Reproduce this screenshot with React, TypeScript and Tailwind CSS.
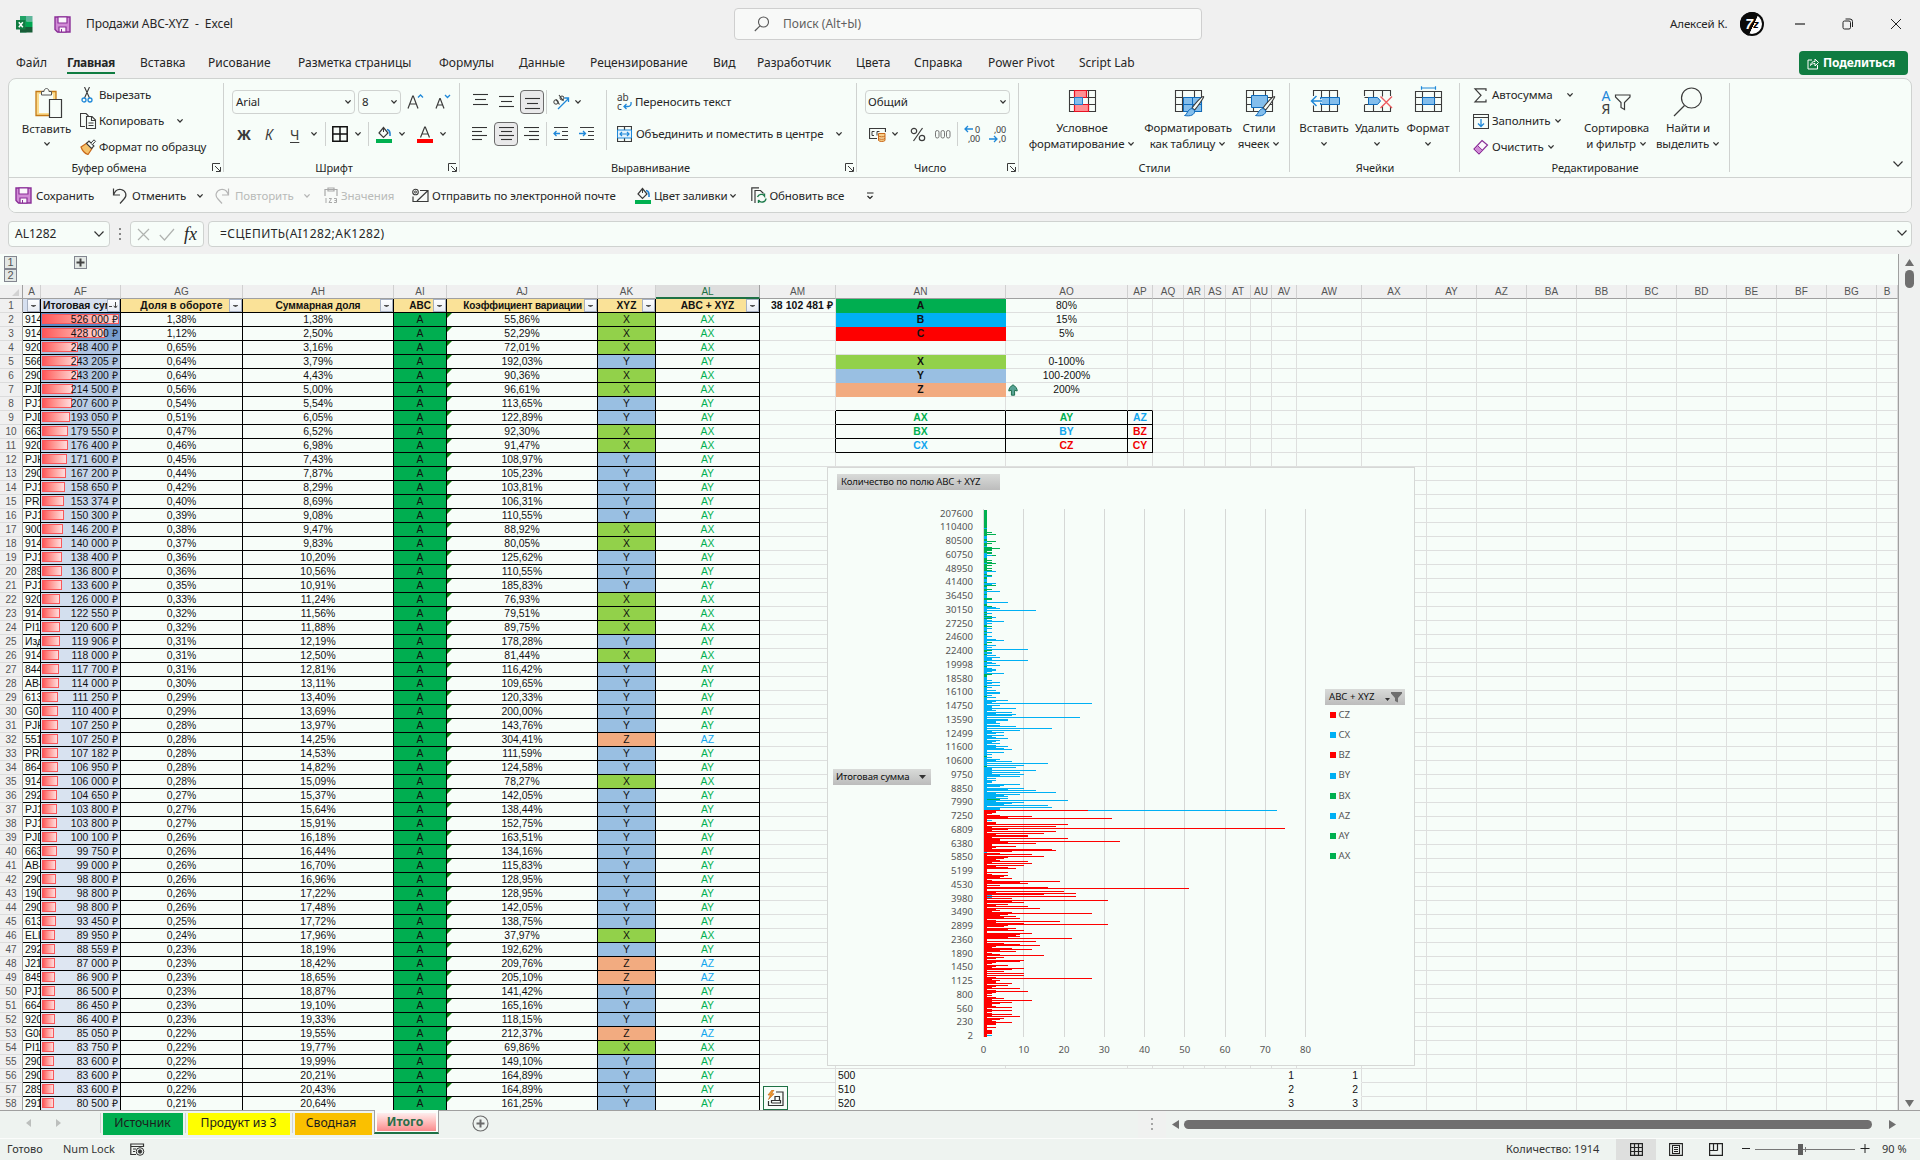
import React from "react";

const SHEET_DATA = `914|526 000|1,38|1,38|55,86|X
914|428 000|1,12|2,50|52,29|X
920|248 400|0,65|3,16|72,01|X
566|243 205|0,64|3,79|192,03|Y
290|243 200|0,64|4,43|90,36|X
PJD|214 500|0,56|5,00|96,61|X
PJ1|207 600|0,54|5,54|113,65|Y
PJD|193 050|0,51|6,05|122,89|Y
663|179 550|0,47|6,52|92,30|X
920|176 400|0,46|6,98|91,47|X
PJH|171 600|0,45|7,43|108,97|Y
290|167 200|0,44|7,87|105,23|Y
PJ1|158 650|0,42|8,29|103,81|Y
PR-|153 374|0,40|8,69|106,31|Y
PJ1|150 300|0,39|9,08|110,55|Y
900|146 200|0,38|9,47|88,92|X
914|140 000|0,37|9,83|80,05|X
PJ1|138 400|0,36|10,20|125,62|Y
289|136 800|0,36|10,56|110,55|Y
PJ1|133 600|0,35|10,91|185,83|Y
920|126 000|0,33|11,24|76,93|X
914|122 550|0,32|11,56|79,51|X
PI1|120 600|0,32|11,88|89,75|X
Изд|119 906|0,31|12,19|178,28|Y
914|118 000|0,31|12,50|81,44|X
844|117 700|0,31|12,81|116,42|Y
AB-|114 000|0,30|13,11|109,65|Y
613|111 250|0,29|13,40|120,33|Y
G07|110 400|0,29|13,69|200,00|Y
PJH|107 250|0,28|13,97|143,76|Y
551|107 250|0,28|14,25|304,41|Z
PR-|107 182|0,28|14,53|111,59|Y
864|106 950|0,28|14,82|124,58|Y
914|106 000|0,28|15,09|78,27|X
292|104 650|0,27|15,37|142,05|Y
PJ1|103 800|0,27|15,64|138,44|Y
PJ1|103 800|0,27|15,91|152,75|Y
PJD|100 100|0,26|16,18|163,51|Y
663|99 750|0,26|16,44|134,16|Y
AB-|99 000|0,26|16,70|115,83|Y
290|98 800|0,26|16,96|128,95|Y
190|98 800|0,26|17,22|128,95|Y
290|98 800|0,26|17,48|142,05|Y
613|93 450|0,25|17,72|138,75|Y
ELI|89 950|0,24|17,96|37,97|X
292|88 559|0,23|18,19|192,62|Y
J21|87 000|0,23|18,42|209,76|Z
845|86 900|0,23|18,65|205,10|Z
PJ1|86 500|0,23|18,87|141,42|Y
664|86 450|0,23|19,10|165,16|Y
920|86 400|0,23|19,33|118,15|Y
G08|85 050|0,22|19,55|212,37|Z
PI1|83 750|0,22|19,77|69,86|X
290|83 600|0,22|19,99|149,10|Y
290|83 600|0,22|20,21|164,89|Y
289|83 600|0,22|20,43|164,89|Y
291|80 500|0,21|20,64|161,25|Y`
  .split("\n")
  .map((l) => l.split("|"));

/* ---------- small shared pieces ---------- */

function Chev({ big = false, c = "#333" }: { big?: boolean; c?: string }) {
  return big ? (
    <svg width="12" height="8" viewBox="0 0 12 8" className="shrink-0" fill="none" stroke={c} strokeWidth="1.2">
      <path d="M1.5 1.5 6 6.2 10.5 1.5" />
    </svg>
  ) : (
    <svg width="8" height="6" viewBox="0 0 8 6" className="shrink-0" fill="none" stroke={c} strokeWidth="1.3">
      <path d="M1.4 1.4 4 4 6.6 1.4" />
    </svg>
  );
}

function Svg({ w, h, children, className = "" }: { w: number; h: number; children: React.ReactNode; className?: string }) {
  return (
    <svg width={w} height={h} viewBox={`0 0 ${w} ${h}`} fill="none" stroke="#3b3b3b" className={`shrink-0 ${className}`}>
      {children}
    </svg>
  );
}

function SaveIcon() {
  return (
    <Svg w={17} h={17}>
      <path d="M1 1h15v15H3.5L1 13.5z" fill="#d18bd6" stroke="#8a2f97" strokeWidth="1.4" />
      <path d="M4 1h9v6H4z" fill="#fbf7fc" stroke="#8a2f97" strokeWidth="1.2" />
      <path d="M5 11h7v5H5z" fill="#fbf7fc" stroke="#8a2f97" strokeWidth="1.2" />
      <path d="M7.5 13v3" stroke="#8a2f97" />
    </Svg>
  );
}

function BucketIcon() {
  return (
    <Svg w={16} h={17}>
      <path d="M7.5 1.5 3 7l4.5 4.5L12 7z" strokeWidth="1.2" />
      <path d="M7.5 1v5" />
      <path d="M11 3.5c2.6.6 3.4 3 3 6.500" stroke="#1f7fd0" strokeWidth="1.6" />
      <path d="M0 13h16v4H0z" fill="#00b050" stroke="none" />
    </Svg>
  );
}

function Launcher() {
  return (
    <Svg w={9} h={9}>
      <path d="M.5 8V.5H8M3 3l5 5M8.500 4v4.500H4" />
    </Svg>
  );
}

function Lines({ rows, w = 15 }: { rows: [number, number, number][]; w?: number }) {
  return (
    <Svg w={w} h={14}>
      {rows.map(([y, a, b], i) => (
        <path key={i} d={`M${a} ${y + 0.5}H${b}`} strokeWidth="1.1" stroke="#333" />
      ))}
    </Svg>
  );
}

function Group({ w, label, launcher = false, children }: { w: string; label: string; launcher?: boolean; children: React.ReactNode }) {
  return (
    <div className={`${w} relative flex h-[98px] shrink-0 flex-col`}>
      <div className="h-[79px] pt-[3px]">{children}</div>
      <div className="flex h-[19px] items-center">
        <span className="flex-1 text-center text-[11px] leading-none tracking-[-0.1px]">{label}</span>
        {launcher && (
          <span className="flex w-4 justify-center">
            <Launcher />
          </span>
        )}
      </div>
      <span className="absolute top-[4px] right-0 h-[89px] w-px bg-[#cfd2d0]" />
    </div>
  );
}

function Sep({ className = "" }: { className?: string }) {
  return <span className={`w-px shrink-0 bg-[#cfd2d0] ${className}`} />;
}

function Small({ w, icon, text, chev = "" }: { w: string; icon: React.ReactNode; text: string; chev?: string }) {
  return (
    <div className={`${w} flex h-[26px] items-center`}>
      <span className="flex w-[19px] shrink-0 items-center">{icon}</span>
      <span className="whitespace-nowrap">{text}</span>
      {chev && (
        <span className={chev}>
          <Chev />
        </span>
      )}
    </div>
  );
}

function Big({ w, icon, a, b, chev = false }: { w: string; icon: React.ReactNode; a: string; b?: string; chev?: boolean }) {
  return (
    <div className={`${w} flex shrink-0 flex-col items-center whitespace-nowrap`}>
      <div className="flex h-[38px] items-center pt-[2px]">{icon}</div>
      <div className="h-[16px] leading-[16px]">{a}</div>
      <div className="flex h-[16px] items-center gap-[3px] leading-[16px]">
        {b}
        {chev && <Chev />}
      </div>
    </div>
  );
}

function TableIcon({ kind }: { kind: "cond" | "table" | "cell" | "insert" | "delete" | "format" }) {
  const grid = <path d="M1.500 4.500h26v21h-26zM1.500 11.500h26M1.500 18.500h26M8.500 4.500v21M20.500 4.500v21" strokeWidth="1.1" />;
  const shifted = kind === "cond" || kind === "table" || kind === "cell";
  return (
    <Svg w={32} h={32} className={shifted ? "ml-[4px]" : "ml-px"}>
      {kind === "cond" && (
        <>
          {grid}
          <path d="M6.500 4.500h12v7h-12zM6.500 18.500h14v7h-14z" fill="#ff8f93" stroke="#e81123" strokeWidth="1.2" />
          <path d="M6.500 11.500h8v7h-8z" fill="#83beec" stroke="#1f7fd0" />
        </>
      )}
      {(kind === "table" || kind === "cell") && (
        <>
          {grid}
          <path d={kind === "table" ? "M9.500 11.500h18v14h-18z" : "M6.500 9.500h16v12h-16z"} fill="#83beec" stroke="#0f6cbd" />
          {kind === "table" && <path d="M9.500 18.500h18M18.500 11.500v14" stroke="#0f6cbd" />}
          <path d="M29.500 10.500c1.500 0-7 11.500-9 13.500l-2.500-2c2-3 9-11.500 11.500-11.500z" fill="#f7fdf9" strokeWidth="1.1" />
          <path d="M18 22.500l2.800 2.200c0 4-4 6-10.300 4.800 3-1 2.500-6 7.500-7z" fill="#83beec" stroke="#0f6cbd" />
        </>
      )}
      {kind === "insert" && (
        <>
          <path d="M4.500 10V4.500h24V11M4.500 19v6.500h24V19M12.500 4.500v21M20.500 4.500v21" strokeWidth="1.1" />
          <path d="M11.500 11.500h19v7h-19z" fill="#83beec" stroke="#0f6cbd" />
          <path d="M20.500 11.500v7" stroke="#0f6cbd" />
          <path d="M13 15H2.500M7.500 10l-5 5 5 5" stroke="#f7fdf9" strokeWidth="3.500" />
          <path d="M13 15H2.500M7.500 10l-5 5 5 5" stroke="#1f88d9" strokeWidth="1.500" />
        </>
      )}
      {kind === "delete" && (
        <>
          <path d="M2.500 10V4.500h26V10M2.500 19v6.500h26V20M11.500 4.500v7M20.500 4.500v6M11.500 18.500v7M20.500 20v5.500M2.500 11.500h5M2.500 18.500h5" strokeWidth="1.1" />
          <path d="M6.500 11.500h9l3 3.500-3 3.500h-9z" fill="#83beec" stroke="#0f6cbd" />
          <path d="M18.500 10.500 30 22M30 10.500 18.500 22" stroke="#ee5b5f" strokeWidth="1.400" />
        </>
      )}
      {kind === "format" && (
        <>
          <path d="M2.500 5.500h26v20h-26zM2.500 11.500h26M2.500 18.500h26M9.500 5.500v20M21.500 5.500v20" strokeWidth="1.100" />
          <path d="M9.500 11.500h12v7h-12z" fill="#83beec" stroke="#0f6cbd" />
          <path d="M8.500 2h14M8.500.2v3.600M22.500.2v3.600" stroke="#1f88d9" strokeWidth="1.200" />
        </>
      )}
    </Svg>
  );
}

/* ---------- window header ---------- */

function TitleBar() {
  return (
    <div className="flex h-[48px] items-center">
      <div className="flex w-[734px] items-center pl-4">
        <Svg w={17} h={17}>
          <path d="M4 0h6.500v16.500H4z" fill="#21a366" stroke="none" />
          <path d="M10 0h6.500v5.500H10z" fill="#5fb69b" stroke="none" />
          <path d="M10 5.500h6.500v5.500H10z" fill="#00a651" stroke="none" />
          <path d="M4 11h12.500v5.500H4z" fill="#185c37" stroke="none" />
          <path d="M0 4h9.500v9.500H0z" fill="#107c41" stroke="none" />
          <path d="M2.800 6.300 6.800 11.300M6.800 6.300 2.800 11.300" stroke="#fff" strokeWidth="1.500" />
        </Svg>
        <span className="ml-[21px]">
          <SaveIcon />
        </span>
        <span className="ml-[15px] tracking-[-0.08px] whitespace-pre">Продажи ABC-XYZ  -  Excel</span>
      </div>
      <div className="flex h-8 w-[468px] items-center rounded-[4px] border border-[#cfcfcf] bg-[#f8f9f8] pl-[19px] text-[#606060]">
        <Svg w={16} h={16}>
          <circle cx="9.500" cy="6" r="5" stroke="#555" strokeWidth="1.100" />
          <path d="M6 9.800.8 15" stroke="#555" strokeWidth="1.100" />
        </Svg>
        <span className="ml-[13px] text-[12px]">Поиск (Alt+Ы)</span>
      </div>
      <div className="ml-auto flex items-center">
        <span className="w-[60px] text-[11.500px] tracking-[-0.1px] whitespace-nowrap">Алексей К.</span>
        <span className="ml-[10px] flex h-6 w-6 items-center justify-center rounded-full bg-[linear-gradient(115deg,#0a0a0a_55%,#fff_56%)] ring-2 ring-[#0a0a0a] ring-inset">
          <span className="font-['Liberation_Sans'] text-[14px] leading-none font-bold text-white italic">7</span>
          <span className="font-['Liberation_Sans'] text-[11px] leading-none font-bold text-black italic">z</span>
        </span>
        <Svg w={12} h={12} className="ml-[30px]">
          <path d="M1 6h10" stroke="#222" strokeWidth="1.200" />
        </Svg>
        <Svg w={12} h={12} className="ml-[36px]">
          <rect x="1" y="3" width="7.500" height="8" rx="1.500" stroke="#222" />
          <path d="M3.500 1h4.500a2.500 2.500 0 0 1 2.500 2.500V9" stroke="#222" />
        </Svg>
        <Svg w={12} h={12} className="mr-[18px] ml-[36px]">
          <path d="M1 1l10 10M11 1 1 11" stroke="#222" />
        </Svg>
      </div>
    </div>
  );
}

function MenuTabs() {
  const tabs: [string, string][] = [
    ["Файл", "w-[51px]"],
    ["Главная", "w-[73px]"],
    ["Вставка", "w-[68px]"],
    ["Рисование", "w-[90px]"],
    ["Разметка страницы", "w-[141px]"],
    ["Формулы", "w-[80px]"],
    ["Данные", "w-[71px]"],
    ["Рецензирование", "w-[123px]"],
    ["Вид", "w-[44px]"],
    ["Разработчик", "w-[99px]"],
    ["Цвета", "w-[58px]"],
    ["Справка", "w-[74px]"],
    ["Power Pivot", "w-[91px]"],
    ["Script Lab", "w-[90px]"],
  ];
  return (
    <div className="flex h-[30px] items-center pl-4">
      {tabs.map(([t, w], i) => (
        <div key={t} className={`${w} flex shrink-0`}>
          <span
            className={
              i === 1
                ? "relative font-bold tracking-[-0.38px] after:absolute after:bottom-[-2px] after:left-0 after:h-[2px] after:w-full after:bg-[#107c41]"
                : "whitespace-nowrap"
            }
          >
            {t}
          </span>
        </div>
      ))}
      <div className="mr-[12px] ml-auto flex h-6 w-[109px] items-center rounded-[4px] bg-[#107c41] pl-[8px] text-white">
        <Svg w={12} h={13}>
          <path d="M5 3H1v9h9.500V8" stroke="#fff" />
          <path d="M3.500 8.500c.5-3 2-4 4.500-4V2L11.500 5.500 8 9V6.500c-2 0-3.500.5-4.500 2z" stroke="#fff" />
        </Svg>
        <span className="ml-[4px] text-[12px] font-bold tracking-[-0.1px]">Поделиться</span>
      </div>
    </div>
  );
}

/* ---------- ribbon ---------- */

function Ribbon() {
  return (
    <div className="flex h-[98px]">
      <Group w="w-[214px]" label="Буфер обмена" launcher>
        <div className="flex">
          <div className="flex w-[70px] flex-col items-center pt-[5px] pl-[3px]">
            <Svg w={29} h={31} className="ml-[3px]">
              <path d="M2 4.500h20v24H2z" fill="#fbdc8e" stroke="#c47a16" strokeWidth="1.300" />
              <path d="M5 7h14v19H5z" fill="#f7fdf9" stroke="none" />
              <path d="M7.500 8V4.500h2.500c0-4 5-4 5 0h2.500V8z" fill="#f7fdf9" stroke="#555" />
              <path d="M15.500 12.500h12v18h-12z" fill="#f7fdf9" strokeWidth="1.200" />
            </Svg>
            <span className="mt-[3px] leading-[16px]">Вставить</span>
            <span className="mt-[4px] flex">
              <Chev />
            </span>
          </div>
          <div>
            <Small
              w="w-[130px]"
              text="Вырезать"
              icon={
                <Svg w={13} h={16} className="ml-px">
                  <path d="M3.500 0 8.500 11M8.500 0 3.500 11" strokeWidth="1.100" />
                  <circle cx="3" cy="13" r="2" stroke="#1f88d9" strokeWidth="1.300" />
                  <circle cx="9" cy="13" r="2" stroke="#1f88d9" strokeWidth="1.300" />
                </Svg>
              }
            />
            <Small
              w="w-[130px]"
              text="Копировать"
              chev="ml-auto mr-[26px] flex"
              icon={
                <Svg w={17} h={16}>
                  <path d="M5 13.500H.5V.5H6L8.500 3" strokeWidth="1.100" />
                  <path d="M6.500 3.500H12l3.500 3.500v8.500h-9zM11.500 3.500V7.500h4M8.500 10h5M8.500 12.500h5" strokeWidth="1.100" />
                </Svg>
              }
            />
            <Small
              w="w-[130px]"
              text="Формат по образцу"
              icon={
                <Svg w={17} h={16}>
                  <path d="M7 4 1 8c1 3 4 6.500 7 7.500l4-6z" fill="#f5c26b" stroke="#c9691a" strokeWidth="1.200" />
                  <path d="M6.500 4.500 9 2l5 5-2.500 2.500z" fill="#f7fdf9" strokeWidth="1.100" />
                  <path d="M11 4 14 .8l1.500 1.500L12.500 5.500" fill="#f7fdf9" />
                </Svg>
              }
            />
          </div>
        </div>
      </Group>

      <Group w="w-[236px]" label="Шрифт" launcher>
        <div className="mt-[8px] flex h-[24px] items-center pl-[8px]">
          <span className="flex h-[24px] w-[123px] items-center justify-between rounded-[4px] border border-[#cfd2d0] pr-[2px] pl-[3px]">
            Arial <Chev />
          </span>
          <span className="ml-[3px] flex h-[24px] w-[43px] items-center justify-between rounded-[4px] border border-[#cfd2d0] pr-[2px] pl-[3px]">
            8 <Chev />
          </span>
          <Svg w={17} h={16} className="ml-[6px]">
            <path d="M1 14.500 5.700 2h.6L11 14.500M2.800 10h6.400" strokeWidth="1.200" />
            <path d="M11 3.500 13.500 1 16 3.500" stroke="#1f88d9" strokeWidth="1.300" />
          </Svg>
          <Svg w={16} h={16} className="ml-[11px]">
            <path d="M1 14.500 4.800 4.500h.4L9 14.500M2.500 11h5" strokeWidth="1.200" />
            <path d="M10 1l2.500 2.500L15 1" stroke="#1f88d9" strokeWidth="1.300" />
          </Svg>
        </div>
        <div className="mt-[8px] flex h-[24px] items-center text-[#3b3b3b]">
          <span className="ml-[13px] w-[28px] text-[14px] font-bold">Ж</span>
          <span className="w-[25px] text-[14px] italic">К</span>
          <span className="w-[20px] text-[14px] underline underline-offset-2">Ч</span>
          <Chev />
          <Sep className="ml-[7px] h-6" />
          <Svg w={16} h={16} className="ml-[6px]">
            <path d="M.8.8h14.400v14.400H.8zM8 1v14M1 8h14" stroke="#111" strokeWidth="1.500" />
          </Svg>
          <span className="ml-[6px] flex">
            <Chev />
          </span>
          <Sep className="ml-[6px] h-6" />
          <span className="ml-[7px]">
            <BucketIcon />
          </span>
          <span className="ml-[6px] flex">
            <Chev />
          </span>
          <Svg w={16} h={17} className="ml-[11px]">
            <path d="M3.500 11.500 7.700 1h.6l4.200 10.500M5 8h6" strokeWidth="1.200" />
            <path d="M0 13h16v4H0z" fill="#f00" stroke="none" />
          </Svg>
          <span className="ml-[6px] flex">
            <Chev />
          </span>
        </div>
      </Group>

      <Group w="w-[397px]" label="Выравнивание" launcher>
        <div className="flex">
          <div className="mt-[8px]">
            <div className="flex h-[24px] items-center">
              <span className="-mt-[4px] ml-[13px] w-[26px]">
                <Lines rows={[[1, 0, 15], [6, 2, 13], [11, 0, 15]]} />
              </span>
              <span className="w-[21px]">
                <Lines rows={[[1, 0, 15], [6, 2, 13], [11, 0, 15]]} />
              </span>
              <span className="flex h-[24px] w-[24px] items-center justify-center rounded-[4px] border border-[#6b6b6b] bg-[#e9e9ea] pt-[4px]">
                <Lines rows={[[1, 0, 15], [6, 2, 13], [11, 0, 15]]} />
              </span>
              <Sep className="ml-[2px] h-6" />
              <Svg w={17} h={16} className="ml-[6px]">
                <circle cx="3" cy="8" r="2.200" />
                <path d="M3 5.500l3.500 5M6 1l4.500 6" strokeWidth="1.100" />
                <circle cx="9" cy="4" r="2" />
                <path d="M5 15 15.500 4.500M11.500 4h4v4" stroke="#1f88d9" strokeWidth="1.300" />
              </Svg>
              <span className="ml-[4px] flex">
                <Chev />
              </span>
            </div>
            <div className="mt-[8px] flex h-[24px] items-center">
              <span className="ml-[12px] w-[22px]">
                <Lines rows={[[0, 0, 15], [4, 0, 10], [8, 0, 15], [12, 0, 10]]} />
              </span>
              <span className="flex h-[24px] w-[24px] items-center justify-center rounded-[4px] border border-[#6b6b6b] bg-[#e9e9ea]">
                <Lines rows={[[0, 0, 15], [4, 2, 13], [8, 0, 15], [12, 2, 13]]} />
              </span>
              <span className="ml-[6px] w-[15px]">
                <Lines rows={[[0, 0, 15], [4, 5, 15], [8, 0, 15], [12, 5, 15]]} />
              </span>
              <Sep className="ml-[7px] h-6" />
              <Svg w={16} h={14} className="ml-[6px]">
                <path d="M1 .5h14M9 4.500h6M9 8.500h6M1 12.500h14" strokeWidth="1.100" />
                <path d="M7 6.500H1M3.500 4 1 6.500 3.500 9" stroke="#1f88d9" strokeWidth="1.300" />
              </Svg>
              <Svg w={16} h={14} className="ml-[10px]">
                <path d="M1 .5h14M9 4.500h6M9 8.500h6M1 12.500h14" strokeWidth="1.100" />
                <path d="M0 6.500h6.500M4 4l2.500 2.500L4 9" stroke="#1f88d9" strokeWidth="1.300" />
              </Svg>
            </div>
          </div>
          <Sep className="mt-[8px] ml-[11px] h-[60px]" />
          <div className="mt-[6px] ml-[10px]">
            <div className="flex h-[28px] items-center">
              <span className="relative flex h-[18px] w-[18px] flex-col text-[10px] leading-[9px] text-[#3b3b3b]">
                <span>ab</span>
                <span>c</span>
                <Svg w={9} h={8} className="absolute top-[9px] left-[6px]">
                  <path d="M8 0c.5 3-1 4.500-3 4.500H1M3.500 2 1 4.500 3.500 7" stroke="#1f88d9" strokeWidth="1.300" />
                </Svg>
              </span>
              <span>Переносить текст</span>
            </div>
            <div className="mt-[6px] flex h-[24px] items-center">
              <span className="w-[19px]">
                <Svg w={15} h={16}>
                  <path d="M.5.5h14v15H.5zM7.500.5V4M7.500 12v3.500" strokeWidth="1.200" />
                  <path d="M.5 4h14v8H.5z" stroke="#1f88d9" fill="#e5f2fb" />
                  <path d="M3 8h9M5 6 3 8l2 2M10 6l2 2-2 2" stroke="#1f88d9" strokeWidth="1.200" />
                </Svg>
              </span>
              <span className="w-[199px] tracking-[-0.16px] whitespace-nowrap">Объединить и поместить в центре</span>
              <Chev />
            </div>
          </div>
        </div>
      </Group>

      <Group w="w-[162px]" label="Число" launcher>
        <div className="mt-[8px] ml-[8px] flex h-[24px] w-[145px] items-center justify-between rounded-[4px] border border-[#cfd2d0] pr-[2px] pl-[2px]">
          Общий <Chev />
        </div>
        <div className="mt-[8px] flex h-[24px] items-center">
          <Svg w={17} h={16} className="ml-[12px]">
            <path d="M8 12.500H.5v-10h16V6" strokeWidth="1.200" />
            <path d="M5.500 5.500H3v4h2M8 9.500V5.500h2.500" />
            <path d="M9.500 7.500h6.500v7c-1 1.300-5.500 1.300-6.500 0zM9.500 10c1 1 5.500 1 6.500 0M9.500 12.500c1 1 5.500 1 6.500 0" fill="#f7cf8a" stroke="#c9691a" />
          </Svg>
          <span className="ml-[5px] flex">
            <Chev />
          </span>
          <Svg w={16} h={15} className="ml-[11px]">
            <circle cx="4" cy="4" r="2.700" strokeWidth="1.200" />
            <circle cx="12" cy="11" r="2.700" strokeWidth="1.200" />
            <path d="M12.500 1 3.500 14" strokeWidth="1.200" />
          </Svg>
          <Svg w={17} h={9} className="ml-[9px]">
            <rect x=".5" y=".5" width="3.500" height="7.500" rx="1.700" stroke="#777" />
            <rect x="6" y=".5" width="3.500" height="7.500" rx="1.700" stroke="#777" />
            <rect x="11.500" y=".5" width="3.500" height="7.500" rx="1.700" stroke="#777" />
          </Svg>
          <Sep className="ml-[5px] h-6" />
          <span className="relative ml-[6px] flex h-[18px] w-[16px] flex-col items-end text-[9px] leading-[9px] tracking-[-0.2px] text-[#3b3b3b]">
            <span>0</span>
            <span>,00</span>
            <Svg w={10} h={8} className="absolute top-0 left-0">
              <path d="M9 4H1M4 1 1 4l3 3" stroke="#1f88d9" strokeWidth="1.300" />
            </Svg>
          </span>
          <span className="relative ml-[10px] flex h-[18px] w-[16px] flex-col items-end text-[9px] leading-[9px] tracking-[-0.2px] text-[#3b3b3b]">
            <span>,00</span>
            <span>,0</span>
            <Svg w={9} h={8} className="absolute top-[10px] left-[-1px]">
              <path d="M0 4h8M5 1l3 3-3 3" stroke="#1f88d9" strokeWidth="1.300" />
            </Svg>
          </span>
        </div>
      </Group>

      <Group w="w-[271px]" label="Стили">
        <div className="flex">
          <Big w="w-[126px]" icon={<TableIcon kind="cond" />} a="Условное" b="форматирование" chev />
          <Big w="w-[86px]" icon={<TableIcon kind="table" />} a="Форматировать" b="как таблицу" chev />
          <Big w="w-[56px]" icon={<TableIcon kind="cell" />} a="Стили" b="ячеек" chev />
        </div>
      </Group>

      <Group w="w-[170px]" label="Ячейки">
        <div className="flex pl-[8px]">
          <Big w="w-[52px]" icon={<TableIcon kind="insert" />} a="Вставить" chev />
          <Big w="w-[54px]" icon={<TableIcon kind="delete" />} a="Удалить" chev />
          <Big w="w-[48px]" icon={<TableIcon kind="format" />} a="Формат" chev />
        </div>
      </Group>

      <Group w="w-[270px]" label="Редактирование">
        <div className="flex">
          <div className="pl-[13px]">
            <Small
              w="w-[111px]"
              text="Автосумма"
              chev="ml-auto mr-[10px] flex"
              icon={
                <Svg w={16} h={15}>
                  <path d="M13 3V.8H2L8 7.300l-6 6.500h11V11.500" strokeWidth="1.200" />
                </Svg>
              }
            />
            <Small
              w="w-[111px]"
              text="Заполнить"
              chev="ml-[3px] flex"
              icon={
                <Svg w={16} h={15}>
                  <path d="M.5.5h15v14H.5zM.5 3.500h15" strokeWidth="1.100" />
                  <path d="M8 5v7M5 9.500l3 3 3-3" stroke="#1f88d9" strokeWidth="1.300" />
                </Svg>
              }
            />
            <Small
              w="w-[111px]"
              text="Очистить"
              chev="ml-[3px] flex"
              icon={
                <Svg w={16} h={16}>
                  <path d="M9 1.500 14.500 6 6 15 1 10z" strokeWidth="1.200" stroke="#8a2f97" fill="#fbf7fc" />
                  <path d="M4.500 6.500 9.500 11.300 6 15 1 10z" fill="#d18bd6" stroke="#8a2f97" />
                </Svg>
              }
            />
          </div>
          <Big
            w="w-[65px]"
            a="Сортировка"
            b="и фильтр"
            chev
            icon={
              <span className="flex items-center">
                <span className="flex w-[12px] flex-col text-[14px] leading-[13.500px] text-[#3b3b3b]">
                  <span className="text-[#1f88d9]">А</span>
                  <span>Я</span>
                </span>
                <Svg w={18} h={18}>
                  <path d="M1.500 2h14.500v2L10.500 9.500v7L7 14.500v-5L1.500 4z" strokeWidth="1.200" />
                </Svg>
              </span>
            }
          />
          <Big
            w="w-[78px]"
            a="Найти и"
            b="выделить"
            chev
            icon={
              <Svg w={30} h={32}>
                <circle cx="18.500" cy="12" r="10" strokeWidth="1.200" />
                <path d="M11.500 19.500 1 30" strokeWidth="1.200" />
              </Svg>
            }
          />
        </div>
      </Group>
      <div className="flex flex-1 items-end justify-end pr-[7px] pb-[9px]">
        <Chev big />
      </div>
    </div>
  );
}

function QuickBar() {
  return (
    <div className="flex h-[35px] items-center rounded-b-[7px] border-t border-[#cfd2d0] bg-[#f8faf8] pt-px whitespace-nowrap">
      <span className="flex w-[27px] pl-[6px]">
        <SaveIcon />
      </span>
      <span className="w-[76px]">Сохранить</span>
      <Svg w={17} h={17} className="mr-[3px]">
        <path d="M1.500 1.500V8H8M1.500 8C3 3.500 6 2 9 2.500c5 1 6.500 6 3 9.500L8 16.500" strokeWidth="1.200" />
      </Svg>
      <span className="w-[64px]">Отменить</span>
      <span className="flex w-[19px]">
        <Chev />
      </span>
      <Svg w={17} h={17} className="mr-[3px]">
        <path d="M13.500 1.500V8H7M13.500 8C12 3.500 9 2 6 2.500c-5 1-6.500 6-3 9.500L7 16.500" strokeWidth="1.200" stroke="#b5b5b5" />
      </Svg>
      <span className="w-[68px] text-[#b9bbb9]">Повторить</span>
      <span className="flex w-[21px]">
        <Chev c="#b5b5b5" />
      </span>
      <Svg w={15} h={17} className="mr-[2px]">
        <path d="M1 9V2.500h12V9M4 4V1h6v3z" stroke="#a9a9a9" strokeWidth="1.200" />
        <path d="M2 11v5M5 11.500h2.500L5 15.500h3M10 11.500h2.500v4H10M10.500 13.500h2" stroke="#a9a9a9" />
      </Svg>
      <span className="w-[71px] text-[#b9bbb9]">Значения</span>
      <Svg w={17} h={16} className="mr-[3px]">
        <path d="M8 2.500h8v11H1v-5M5 13l11-10.500" strokeWidth="1.200" />
        <circle cx="3.500" cy="4" r="2.800" strokeWidth="1.100" />
        <circle cx="3.500" cy="4" r="1" />
      </Svg>
      <span className="w-[203px]">Отправить по электронной почте</span>
      <span className="mr-[3px]">
        <BucketIcon />
      </span>
      <span className="mr-[2px] tracking-[-0.15px]">Цвет заливки</span>
      <Chev />
      <Svg w={16} h={17} className="mr-[2px] ml-[14px]">
        <path d="M.8 14V.8H8M4 16V3.500h5.500l3 3" strokeWidth="1.200" />
        <path d="M6.500 10a4 4 0 0 1 7-1V6.500M15 11.500a4 4 0 0 1-7.500 1.500v3" stroke="#1c7a4a" strokeWidth="1.400" />
      </Svg>
      <span className="w-[97px]">Обновить все</span>
      <Svg w={8} h={8}>
        <path d="M1 1h6.500M1.500 4 4 6.500 6.500 4" stroke="#222" strokeWidth="1.200" />
      </Svg>
    </div>
  );
}

function FormulaBar() {
  return (
    <div className="mt-[8px] ml-[8px] flex h-[26px]">
      <div className="flex w-[102px] items-center justify-between rounded-[4px] border border-[#cfd2d0] bg-[#f7fdf9] pr-[4px] pl-[6px] text-[12px]">
        AL1282 <Chev big />
      </div>
      <div className="flex w-[20px] flex-col items-center justify-center gap-[3px]">
        <i className="size-[2px] bg-[#888]" />
        <i className="size-[2px] bg-[#888]" />
        <i className="size-[2px] bg-[#888]" />
      </div>
      <div className="flex w-[74px] items-center rounded-[4px] border border-[#cfd2d0] bg-[#f7fdf9] pl-[6px]">
        <Svg w={13} h={13}>
          <path d="M1 1l11 11M12 1 1 12" stroke="#b0b3b0" strokeWidth="1.200" />
        </Svg>
        <Svg w={16} h={13} className="ml-[9px]">
          <path d="M.8 7 5.500 12 15 1" stroke="#b0b3b0" strokeWidth="1.200" />
        </Svg>
        <span className="ml-[9px] font-['Liberation_Serif'] text-[18px] leading-none italic">fx</span>
      </div>
      <div className="mr-[8px] ml-[4px] flex flex-1 items-center justify-between rounded-[4px] border border-[#cfd2d0] bg-[#f7fdf9] pr-[3px] pl-[11px] text-[12px]">
        <span className="tracking-[0.46px]">=СЦЕПИТЬ(AI1282;AK1282)</span>
        <span className="-mt-[3px] flex">
          <Chev big />
        </span>
      </div>
    </div>
  );
}

/* ---------- worksheet ---------- */

const COLS: [string, string][] = [
  ["A", "w-[18px]"],
  ["AF", "w-[80px]"],
  ["AG", "w-[122px]"],
  ["AH", "w-[151px]"],
  ["AI", "w-[53px]"],
  ["AJ", "w-[151px]"],
  ["AK", "w-[58px]"],
  ["AL", "w-[104px]"],
  ["AM", "w-[76px]"],
  ["AN", "w-[170px]"],
  ["AO", "w-[122px]"],
  ["AP", "w-[25px]"],
  ["AQ", "w-[31px]"],
  ["AR", "w-[21px]"],
  ["AS", "w-[21px]"],
  ["AT", "w-[25px]"],
  ["AU", "w-[21px]"],
  ["AV", "w-[25px]"],
  ["AW", "w-[65px]"],
  ["AX", "w-[65px]"],
  ["AY", "w-[50px]"],
  ["AZ", "w-[50px]"],
  ["BA", "w-[50px]"],
  ["BB", "w-[50px]"],
  ["BC", "w-[50px]"],
  ["BD", "w-[50px]"],
  ["BE", "w-[50px]"],
  ["BF", "w-[50px]"],
  ["BG", "w-[50px]"],
  ["B", "w-[21px]"],
];

const HEAD = ["", "Итоговая сумма", "Доля в обороте", "Суммарная доля", "ABC", "Коэффициент вариации", "XYZ", "ABC + XYZ"];
const HEAD_CLS = [
  "",
  "justify-start pl-[2px] text-[10.400px]",
  "justify-center text-[10.400px] tracking-[0.1px]",
  "justify-center text-[10.200px]",
  "justify-end pr-[15px] text-[10px]",
  "justify-end pr-[15px] text-[10px] tracking-[-0.1px]",
  "justify-center text-[10.200px]",
  "justify-center text-[10.200px]",
];

const XYZ_BG: Record<string, string> = { X: "bg-[#92d14a]", Y: "bg-[#99bfe2]", Z: "bg-[#f2ab80]" };
const AN_BG: Record<number, [string, string, string]> = {
  1: ["A", "bg-[#00ae50]", "80%"],
  2: ["B", "bg-[#00b0f4]", "15%"],
  3: ["C", "bg-[#fe0000]", "5%"],
  5: ["X", "bg-[#92d14a]", "0-100%"],
  6: ["Y", "bg-[#99bfe2]", "100-200%"],
  7: ["Z", "bg-[#f2ab80]", "200%"],
};
const G = "text-[#00b050]";
const B = "text-[#10a6ee]";
const R = "text-[#f00000]";
const MATRIX: Record<number, [string, string][]> = {
  9: [["AX", G], ["AY", G], ["AZ", B]],
  10: [["BX", G], ["BY", B], ["BZ", R]],
  11: [["CX", B], ["CZ", R], ["CY", R]],
};

function FilterBtn({ sorted = false }: { sorted?: boolean }) {
  return (
    <span className="absolute top-0 right-0 flex h-[13px] w-[13px] items-center justify-center border border-[#a7b1c2] bg-gradient-to-b from-[#fdfeff] to-[#e8ecf3]">
      {sorted ? (
        <svg width="9" height="7" viewBox="0 0 9 7" fill="none" stroke="#444">
          <path d="M0 4.500h3M6.500 0v5M4.800 3.800 6.500 6l1.700-2.200" />
        </svg>
      ) : (
        <svg width="7" height="4" viewBox="0 0 7 4" fill="#555">
          <path d="M1 1h5v.8L3.800 3h-.6L1 1.800z" />
        </svg>
      )}
    </span>
  );
}

function LeftCell({ row, col }: { row: number; col: number }) {
  const w = COLS[col][1];
  const base = `${w} relative flex h-[14px] shrink-0 items-center overflow-hidden whitespace-nowrap border-r border-b border-black`;
  if (row === 1) {
    return (
      <div className={`${base} font-bold ${HEAD_CLS[col]} ${col < 2 ? "bg-[#d6e0f0]" : "bg-[#fae298]"}`}>
        {HEAD[col]}
        <FilterBtn sorted={col === 1} />
      </div>
    );
  }
  const d = SHEET_DATA[row - 2];
  if (col === 0) return <div className={`${base} pl-[2px]`}>{d[0]}</div>;
  if (col === 1) {
    const v = Number(d[1].replace(" ", "")) / 1000;
    const t = (v - 80) / 446;
    const bg = `rgb(${Math.round(224 - 133 * t)},${Math.round(232 - 96 * t)},${Math.round(243 - 48 * t)})`;
    return (
      <div className={`${base} justify-end pr-[2px] tracking-[0.08px]`} style={{ backgroundColor: bg }}>
        <span
          className="absolute top-[1px] left-[1px] h-[10px] border border-[#f9585b] bg-gradient-to-r from-[#ff5559] to-[#fddcdd]"
          style={{ width: Math.round((v / 526) * 77) }}
        />
        <span className="relative">{d[1]} ₽</span>
      </div>
    );
  }
  if (col === 4) return <div className={`${base} justify-center bg-[#00ae50]`}>A</div>;
  if (col === 5)
    return (
      <div className={`${base} justify-center`}>
        <svg className="absolute top-0 left-0" width="5" height="5">
          <path d="M0 0h5L0 5z" fill="#0b7d0b" />
        </svg>
        {d[4]}%
      </div>
    );
  if (col === 6) return <div className={`${base} justify-center ${XYZ_BG[d[5]]}`}>{d[5]}</div>;
  if (col === 7) return <div className={`${base} justify-center ${d[5] === "Z" ? B : G}`}>A{d[5]}</div>;
  return <div className={`${base} justify-center`}>{d[col]}%</div>;
}

function RightCell({ row, col }: { row: number; col: number }) {
  const w = COLS[col][1];
  const name = COLS[col][0];
  let cls = "border-[#dedfde] justify-center";
  let content: React.ReactNode = null;
  if (row === 1 && name === "AM") {
    cls = "border-[#dedfde] justify-end pr-[2px] font-bold tracking-[0.1px]";
    content = "38 102 481 ₽";
  }
  if (AN_BG[row]) {
    if (name === "AN") {
      cls = `${AN_BG[row][1]} justify-center border-transparent bg-clip-border font-bold`;
      content = AN_BG[row][0];
    }
    if (name === "AO") {
      content = (
        <>
          {row === 7 && (
            <svg className="absolute top-[1px] left-[2px]" width="10" height="12" viewBox="0 0 10 12">
              <path d="M5 .8C7.500 2.300 9.300 4.500 9.200 7L6.600 6.300v4.900H3.400V6.300L.8 7C.7 4.500 2.500 2.300 5 .8z" fill="#58a394" stroke="#1e6f4f" />
            </svg>
          )}
          {AN_BG[row][2]}
        </>
      );
    }
  }
  const mi = ["AN", "AO", "AP"].indexOf(name);
  if (mi >= 0 && MATRIX[row]) {
    cls = `border-black justify-center font-bold ${MATRIX[row][mi][1]}`;
    content = MATRIX[row][mi][0];
  }
  if (mi >= 0 && row === 8) cls = "border-r-[#dedfde] border-b-black justify-center";
  if (name === "AM" && MATRIX[row]) cls = "border-r-black border-b-[#dedfde]";
  if (row >= 56 && col >= 9 && col <= 18) {
    cls = name === "AW" ? "border-b-transparent border-r-[#dedfde] justify-end pr-[3px]" : "border-transparent justify-end pr-[2px]";
    if (name === "AN") {
      cls = "border-transparent justify-start pl-[2px]";
      content = String(500 + (row - 56) * 10);
    }
    if (name === "AV" || name === "AW") content = String(row - 55);
  }
  return <div className={`${w} relative flex h-[14px] shrink-0 items-center border-r border-b whitespace-nowrap ${cls}`}>{content}</div>;
}

function Sheet() {
  return (
    <div className="relative w-[1898px] shrink-0 overflow-hidden bg-[#f7fdf9] font-['Liberation_Sans',Arial,sans-serif] text-[10.400px] leading-[13px] text-[#111]">
      <div className="flex h-[31px] pt-[2px]">
        <div className="ml-[4px] flex flex-col text-[11px] leading-[11px] text-[#555]">
          <span className="flex h-[13px] w-[13px] items-center justify-center border border-[#82858f] bg-[#e3e8e5]">1</span>
          <span className="flex h-[13px] w-[13px] items-center justify-center border border-[#82858f] bg-[#e3e8e5]">2</span>
        </div>
        <span className="ml-[57px] flex h-[13px] w-[13px] items-center justify-center border border-[#82858f] bg-[#e3e8e5]">
          <svg width="9" height="9" stroke="#444" strokeWidth="2">
            <path d="M4.500.5v8M.5 4.500h8" />
          </svg>
        </span>
      </div>
      <div className="flex h-[14px] bg-[#f0f0f0] text-[10px] text-[#555]">
        <div className="flex w-[23px] shrink-0 items-end justify-end border-r border-b border-[#a0a0a0] pr-[3px] pb-[2px]">
          <svg width="7" height="7">
            <path d="M7 0v7H0z" fill="#d2d2d2" />
          </svg>
        </div>
        {COLS.map(([n, w], i) => (
          <div
            key={i}
            className={`${w} flex shrink-0 items-center justify-center border-r ${
              n === "AL" ? "border-b-2 border-r-[#a0a0a0] border-b-[#1e7145] bg-[#dedede] text-[#1e7145]" : "border-b border-r-[#d0d0d0] border-b-[#a0a0a0]"
            }`}
          >
            {n}
          </div>
        ))}
      </div>
      {Array.from({ length: 58 }, (_, i) => i + 1).map((row) => (
        <div key={row} className="flex h-[14px]">
          <div className="flex h-[14px] w-[23px] shrink-0 items-center justify-center border-r border-b border-r-[#a0a0a0] border-b-[#dcdcdc] bg-[#f0f0f0] text-[10px] text-[#555]">
            {row}
          </div>
          {COLS.map((_, c) => (c < 8 ? <LeftCell key={c} row={row} col={c} /> : <RightCell key={c} row={row} col={c} />))}
        </div>
      ))}
      <Chart />
      <div className="absolute top-[832px] left-[763px] flex h-[24px] w-[25px] items-center justify-center border border-[#1e7145] bg-[#f7fdf9]">
        <svg width="17" height="17" viewBox="0 0 17 17" fill="none" stroke="#333" strokeWidth="1.200">
          <path d="M9 2h7v13.500H1.500V11M4.500 13V10.500H8V6.500h4.500v4h-4M4.500 13h9v-2.500h-2" />
          <path d="M5 0 1 5h2.500L1.500 9.500 7 3.800H4.500L7 0z" fill="#f0a030" stroke="#c9691a" strokeWidth=".7" />
        </svg>
      </div>
    </div>
  );
}

/* ---------- pivot chart ---------- */

const AXIS = "207600 110400 80500 60750 48950 41400 36450 30150 27250 24600 22400 19998 18580 16100 14750 13590 12499 11600 10600 9750 8850 7990 7250 6809 6380 5850 5199 4530 3980 3490 2899 2360 1890 1450 1125 800 560 230 2".split(" ");

const BARS = (
  "532:2g 534:3g 541:3g 543:2g 547:2g 548:4g 549:2g 550:2g 552:2g 553:2g 555:3g 555:2c 560:2g 562:2g 563:3g 565:2g 568:2g 570:2g 571:3 575:2g 576:2 583:3 584:2 585:3g 589:2g 591:4 598:2g 599:2g 602:6 606:2g 607:3 608:4 610:13 613:2 616:2g 617:3 618:2g 620:2 621:5 623:2 626:2g 628:2 632:2 636:2 639:3 640:5 642:2g 645:3 647:2 649:11 650:2g 652:2 653:2 655:3 657:4 658:2 659:2 660:11 662:2 663:3 665:4 668:2 669:3 670:3 671:2 673:5 674:2g 680:2 682:4 683:2 685:4 687:2 690:3 692:4 693:4 695:2 697:3 700:6 701:3 702:2 703:27 705:4 706:2 707:2 708:8 709:2 710:3 712:7 713:3 714:8 715:7 717:24 719:6 720:6 721:3 722:3 723:4 725:4 726:8 728:17 730:9 731:2 732:5 733:3 735:5 736:2 737:3 738:6 740:4 741:3 742:2 743:4 745:3 746:6 747:3 748:5 749:7 752:5 754:2 757:2 759:4 760:3 761:7 763:16 765:10 767:8 768:2 769:2 770:13 771:2 772:9 773:2 774:10 775:4 776:9 778:3 780:3 781:2 782:2 784:9 785:5 786:4 788:10 789:6 790:13 792:18 793:3 794:9 795:5 796:6 797:3 798:6 799:4g 800:21 801:3 802:10 803:7 804:5 805:16 807:17 808:4 809:4 810:73 810:26r " +
  "811:3 812:3 813:2 815:4 816:12 817:6 818:32 820:2b 822:3 823:3 824:21 826:18 827:2 828:75 829:6 830:2 831:18 833:15 834:3 835:11 836:11 837:2 838:21 839:4 840:4 841:34 842:6 843:13 844:2 845:2 846:8 847:3 848:2 849:17 850:18 851:7 853:4 854:12 856:15 857:6 858:5 859:3 860:4 861:11 862:2 863:12 865:10 866:3 867:6 868:8 872:6 874:2 875:6 876:5 877:4 878:7 880:2 881:19 882:9 883:11 885:4 887:16 888:51 891:20 892:3 893:23 894:15 895:2b 896:23 897:2b 898:7 900:31 901:7 902:10 904:6 905:3 906:11 908:14 909:3 910:4 911:2 912:7 913:27 914:6 915:4 916:8 917:5 918:9 920:3 921:19 922:3 923:10 924:31 925:6 926:5 928:8 929:6 930:10 933:12 934:9 935:8 936:9 937:6 938:22 941:13 943:5 944:9 945:14 946:3 947:2 948:7 949:12 950:4 951:8 953:2 954:4 955:15 957:5 958:3 960:10 961:9 962:3 963:2 965:6 966:3 967:2 968:10 969:7 971:5 973:10 975:10 977:3 978:27 979:2 980:4 981:3 982:3 983:7 985:6 986:3 987:2 988:9 990:3 991:11 992:3 993:2 995:2 997:3 998:5 999:2 1000:12 1001:2 1002:7 1003:4 1004:2 1005:2 1006:3 1007:7 1009:2 1010:7 1011:2 1013:2 1014:7 1015:2 1016:9 1018:5 1019:4 1020:2 1021:3 1022:7 1023:3 1024:3 1027:3 1030:2 1031:2 1032:2 1033:2 1035:2b"
)
  .split(" ")
  .map((s) => {
    const [y, r] = s.split(":");
    const n = Number(y);
    const v = parseInt(r, 10);
    const k = r.replace(/\d/g, "");
    const fill = k === "g" ? "#00b050" : k === "r" ? "#fe0000" : k === "b" ? "#00b0f4" : n > 810 ? "#fe0000" : "#00b0f4";
    const start = v < 3 || k === "g" ? 987 : 984;
    return { y: n, start, end: Math.round(983.5 + v * 4.025), fill };
  });

const GREEN_BASE: [number, number][] = [
  [510, 18], [529, 7], [539, 2], [543, 3], [547, 6], [558, 5], [564, 8], [574, 1], [577, 2], [582, 1], [585, 2], [589, 2], [594, 1], [598, 2], [604, 2],
  [612, 1], [614, 1], [616, 3], [625, 2], [631, 1], [634, 1], [644, 1], [650, 2], [654, 1], [661, 1], [666, 1], [674, 3], [686, 1], [696, 1], [756, 1], [766, 1],
];

const LEGEND: [string, string][] = [
  ["CZ", "#fe0000"],
  ["CX", "#00b0f4"],
  ["BZ", "#fe0000"],
  ["BY", "#00b0f4"],
  ["BX", "#00b050"],
  ["AZ", "#00b0f4"],
  ["AY", "#00b050"],
  ["AX", "#00b050"],
];

function Chart() {
  const x = (v: number) => 983.5 + v * 4.025;
  return (
    <div className="absolute top-[213px] left-[827px] h-[599px] w-[588px] border border-[#d6d8d6] bg-[#f7fdf9] font-['Noto_Sans','Open_Sans',sans-serif]">
      <svg className="absolute inset-0" width="586" height="597" viewBox="828 468 586 597">
        <g shapeRendering="crispEdges">
          {[0, 1, 2, 3, 4, 5, 6, 7, 8].map((i) => (
            <rect key={i} x={Math.floor(x(i * 10))} y="509" width="1" height="528" fill="#d6d8d6" />
          ))}
          <rect x="984" y="510" width="3" height="300" fill="#00b0f4" />
          {GREEN_BASE.map(([y, h]) => (
            <rect key={y} x="984" y={y} width="3" height={h} fill="#00b050" />
          ))}
          <rect x="984" y="810" width="3" height="227" fill="#fe0000" />
          <rect x="984" y="852" width="3" height="1" fill="#00b0f4" />
          {BARS.map((b, i) => (
            <rect key={i} x={b.start} y={b.y} width={b.end - b.start} height="1" fill={b.fill} />
          ))}
          {LEGEND.map(([n, c], i) => (
            <rect key={n} x="1330" y={Math.round(712 + i * 20.2)} width="6" height="6" fill={c} />
          ))}
        </g>
        <g fill="#555" fontSize="9.600" className="font-['Noto_Sans']">
          {AXIS.map((t, i) => (
            <text key={t} x="973" y={516.7 + i * 13.75} textAnchor="end">
              {t}
            </text>
          ))}
          {[0, 10, 20, 30, 40, 50, 60, 70, 80].map((t) => (
            <text key={t} x={x(t)} y="1053" textAnchor="middle">
              {t}
            </text>
          ))}
          {LEGEND.map(([n], i) => (
            <text key={n} x="1338.500" y={717.7 + i * 20.2}>
              {n}
            </text>
          ))}
        </g>
      </svg>
      <div className="absolute top-[6px] left-[9px] flex h-[16px] w-[163px] items-center bg-gradient-to-b from-[#d9dbd9] to-[#bcbcbc] pb-px pl-[4px] text-[9.600px] tracking-[-0.15px] whitespace-nowrap text-[#111]">
        Количество по полю ABC + XYZ
      </div>
      <div className="absolute top-[301px] left-[5px] flex h-[16px] w-[98px] items-center justify-between bg-gradient-to-b from-[#d9dbd9] to-[#bcbcbc] pr-[5px] pb-px pl-[3px] text-[9.600px] tracking-[-0.15px] whitespace-nowrap text-[#111]">
        Итоговая сумма
        <svg width="7" height="4">
          <path d="M0 0h7L3.500 4z" fill="#333" />
        </svg>
      </div>
      <div className="absolute top-[221px] left-[497px] flex h-[16px] w-[80px] items-center bg-gradient-to-b from-[#d9dbd9] to-[#bcbcbc] pb-px pl-[4px] text-[9.600px] whitespace-nowrap text-[#111]">
        ABC + XYZ
        <svg width="18" height="12" viewBox="0 0 18 12" className="mr-[2px] ml-auto">
          <path d="M0 7h5L2.500 10z" fill="#333" />
          <path d="M6 1h11v1.500L13 7v4.500L10 10V7L6 2.500z" fill="#6e6e6e" />
        </svg>
      </div>
    </div>
  );
}

/* ---------- footer ---------- */

function SheetTabs() {
  return (
    <div className="flex h-[28px] w-full shrink-0 border-t border-[#a0a0a0] bg-[#eef3f0] text-[12.200px] text-[#1c1c1c]">
      <div className="flex w-[100px] items-center pb-[3px]">
        <svg width="5" height="8" className="ml-[26px]">
          <path d="M5 0v8L0 4z" fill="#bcbfbd" />
        </svg>
        <svg width="5" height="8" className="ml-[25px]">
          <path d="M0 0v8l5-4z" fill="#bcbfbd" />
        </svg>
      </div>
      <Sep className="mt-[2px] h-[20px] bg-[#9b9b9b]" />
      <div className="mt-[2px] ml-[2px] flex h-[22px] w-[80px] items-center justify-center bg-[#00ae50] pr-px pb-[2px]">Источник</div>
      <Sep className="mt-[2px] ml-[2px] h-[20px] bg-[#9b9b9b]" />
      <div className="mt-[2px] ml-[2px] flex h-[22px] w-[102px] items-center justify-center bg-[#ffff00] pr-px pb-[2px]">Продукт из 3</div>
      <Sep className="mt-[2px] ml-[2px] h-[20px] bg-[#9b9b9b]" />
      <div className="mt-[2px] ml-[2px] flex h-[22px] w-[77px] items-center justify-center bg-[#fac000] pr-[5px] pb-[2px]">Сводная</div>
      <div className="-mt-px ml-[2px] h-[24px] w-[65px] border-x border-b-2 border-x-[#a0a0a0] border-b-[#1e7145] bg-[#fbfdfb] px-[2px] pt-[3px]">
        <div className="flex h-[18px] items-center justify-center bg-gradient-to-b from-[#fdeeee] to-[#f98a8c] pr-[3px] font-bold text-[#2c6e49]">Итого</div>
      </div>
      <svg width="17" height="17" viewBox="0 0 17 17" className="mt-[4px] ml-[33px]" fill="none" stroke="#6b6b6b">
        <circle cx="8.500" cy="8.500" r="7.500" strokeWidth="1.100" />
        <path d="M8.500 4.500v8M4.500 8.500h8" strokeWidth="2" />
      </svg>
      <div className="ml-[649px] flex w-[28px] items-center justify-center bg-[#f0f1f0]">
        <span className="-mt-[2px] -ml-px flex flex-col gap-[3px]">
          <i className="size-[2px] bg-[#a5a5a5]" />
          <i className="size-[2px] bg-[#a5a5a5]" />
          <i className="size-[2px] bg-[#a5a5a5]" />
        </span>
      </div>
      <svg width="7" height="9" className="mt-[9px] ml-[6px]">
        <path d="M7 0v9L0 4.500z" fill="#6f6f6f" />
      </svg>
      <div className="mt-[9px] ml-[5px] h-[9px] w-[688px] rounded-full bg-[#706f6f]" />
      <svg width="7" height="9" className="mt-[9px] ml-[17px]">
        <path d="M0 0v9l7-4.500z" fill="#6f6f6f" />
      </svg>
    </div>
  );
}

function StatusBar() {
  return (
    <div className="flex h-[22px] shrink-0 items-center border-t border-[#fbfcfb] bg-[#eef3f0] text-[11px] text-[#333]">
      <span className="w-[63px] pl-[7px]">Готово</span>
      <span className="w-[67px]">Num Lock</span>
      <Svg w={15} h={13}>
        <path d="M6 11.500H.8V1H13.500V4M.8 3.500h12.700M3 6h3M3 8.500h2" strokeWidth="1.200" stroke="#333" />
        <circle cx="10" cy="8.500" r="3.800" stroke="#333" />
        <circle cx="10" cy="8.500" r="1.700" fill="#333" />
      </Svg>
      <span className="ml-auto w-[110px] whitespace-nowrap">Количество: 1914</span>
      <span className="flex h-full w-[40px] items-center justify-center bg-[#dedfde] pb-px">
        <Svg w={13} h={13}>
          <path d="M.6.6h11.800v11.800H.6zM.6 4.500h11.800M.6 8.500h11.800M4.500.6v11.800M8.500.6v11.800" stroke="#222" strokeWidth="1.200" />
        </Svg>
      </span>
      <span className="flex w-[40px] justify-center pb-px">
        <Svg w={14} h={13}>
          <path d="M.6.6h12.800v11.800H.6zM3.500 2.500h7v8h-7zM5 4.500h4M5 6.500h4M5 8.500h4" stroke="#222" strokeWidth="1.100" />
        </Svg>
      </span>
      <span className="flex w-[40px] justify-center pb-px">
        <Svg w={14} h={13}>
          <path d="M.6.6h12.800v11.800H.6zM4.500.6V7.500M8.500.6v6.900M.6 7.500h8" stroke="#222" strokeWidth="1.200" />
        </Svg>
      </span>
      <Svg w={132} h={13} className="ml-[3px]">
        <path d="M3 5.500h8M121.500 5.500h9M126 1v9" stroke="#222" />
        <path d="M16 6.500h100M66.500 4v5" stroke="#777" />
        <path d="M59 1h5v11h-5z" fill="#5e5e5e" stroke="none" />
      </Svg>
      <span className="ml-[11px] w-[38px] whitespace-nowrap">90 %</span>
    </div>
  );
}

export default function App() {
  return (
    <div className="flex h-[1160px] w-[1920px] flex-col overflow-hidden bg-[#f0f0f0] font-['Noto_Sans','Open_Sans',sans-serif] text-[12px] text-[#262626]">
      <TitleBar />
      <MenuTabs />
      <div className="mr-[8px] ml-[8px] h-[135px] shrink-0 rounded-[8px] border border-[#cfd2d0] bg-[#f7fdf9] text-[11.500px] tracking-[-0.1px]">
        <div className="h-[98px] pl-px">
          <Ribbon />
        </div>
        <QuickBar />
      </div>
      <FormulaBar />
      <div className="mt-[7px] flex h-[856px] shrink-0">
        <Sheet />
        <div className="flex w-[22px] flex-col items-center border-l border-[#a0a0a0] bg-[#eff1f0]">
          <svg width="9" height="7" className="mt-[5px]">
            <path d="M0 7h9L4.500 0z" fill="#6f6f6f" />
          </svg>
          <div className="mt-[4px] h-[18px] w-[9px] rounded-full bg-[#6f6f6f]" />
          <svg width="9" height="7" className="mt-auto mb-[3px]">
            <path d="M0 0h9L4.500 7z" fill="#6f6f6f" />
          </svg>
        </div>
      </div>
      <SheetTabs />
      <StatusBar />
    </div>
  );
}
